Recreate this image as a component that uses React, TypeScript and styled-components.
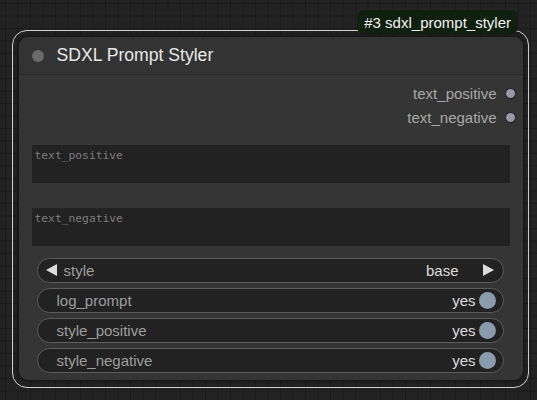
import React from "react";
import styled, { createGlobalStyle } from "styled-components";

const Global = createGlobalStyle`
  html, body { margin: 0; padding: 0; background: #222; }
  body { font-family: "Liberation Sans", Arial, sans-serif; }
`;

const Canvas = styled.div`
  position: relative;
  width: 537px;
  height: 400px;
  overflow: hidden;
  background-color: #232323;
  background-image:
    linear-gradient(to right, #1b1b1b 1px, transparent 1px),
    linear-gradient(to bottom, #1b1b1b 1px, transparent 1px);
  background-size: 12.5px 12.5px;
  background-position: 5px 3px;
  padding: 30px 0 0 12px;
  box-sizing: border-box;
`;

const Outline = styled.div`
  position: relative;
  width: 517px;
  height: 358px;
  box-sizing: border-box;
  border: 1.5px solid #d0d0d0;
  border-radius: 15px;
  padding: 5.5px 5.5px 7.5px 5.5px;
`;

const Badge = styled.div`
  position: absolute;
  top: -21px;
  right: 10px;
  height: 24px;
  padding: 0 7px;
  display: flex;
  align-items: center;
  background: #10200f;
  color: #f2f2f2;
  font-size: 15px;
  border-radius: 7px;
  white-space: nowrap;
`;

const Node = styled.div`
  display: flex;
  flex-direction: column;
  height: 100%;
  background: #353535;
  border-radius: 9px;
  box-shadow: 0 0 5px 1px rgba(0, 0, 0, 0.45);
  overflow: hidden;
`;

const TitleBar = styled.div`
  display: flex;
  align-items: center;
  height: 38px;
  padding-left: 13px;
  padding-top: 1px;
  box-sizing: border-box;
  gap: 13px;
  background: #333;
  border-bottom: 1px solid #2b2b2b;
  flex-shrink: 0;
`;

const TitleDot = styled.div`
  width: 12px;
  height: 12px;
  border-radius: 50%;
  background: #6a6a6a;
`;

const Title = styled.div`
  color: #e8e8e8;
  font-size: 17.6px;
`;

const Outputs = styled.div`
  display: flex;
  flex-direction: column;
  padding-top: 7px;
`;

const OutputRow = styled.div`
  display: flex;
  justify-content: flex-end;
  align-items: center;
  height: 24px;
  padding-right: 7px;
  gap: 8px;
  color: #a8a8a8;
  font-size: 15px;
`;

const SlotDot = styled.div`
  width: 9px;
  height: 9px;
  border-radius: 50%;
  background: #9a9aa6;
  border: 1px solid #1a1a1a;
`;

const TextBox = styled.div<{ $mt: number }>`
  margin: ${(p) => p.$mt}px 13px 0 13px;
  height: 38px;
  flex-shrink: 0;
  background: #222;
  color: #7c7c7c;
  font-family: "DejaVu Sans Mono", "Liberation Mono", monospace;
  font-size: 11.3px;
  padding: 4px 3px;
  box-sizing: border-box;
`;

const Widgets = styled.div`
  display: flex;
  flex-direction: column;
  gap: 5px;
  margin: 12px 19px 0 18px;
`;

const Widget = styled.div`
  display: flex;
  align-items: center;
  height: 25px;
  box-sizing: border-box;
  border: 1px solid #5c5c5c;
  border-radius: 13px;
  background: #222;
  font-size: 15px;
  padding: 0 10px 0 19px;
`;

const ComboWidget = styled(Widget)`
  padding: 0 9px 0 8px;
`;

const Label = styled.span`
  color: #9d9d9d;
  flex: 1;
`;

const Value = styled.span`
  color: #dcdcdc;
`;

const Arrow = styled.span<{ $right?: boolean }>`
  width: 0;
  height: 0;
  border-top: 6px solid transparent;
  border-bottom: 6px solid transparent;
  ${(p) =>
    p.$right
      ? "border-left: 11px solid #dcdcdc; margin-left: 24px;"
      : "border-right: 11px solid #dcdcdc; margin-right: 7px;"}
`;

const Toggle = styled.span`
  width: 17px;
  height: 17px;
  border-radius: 50%;
  background: #8a9bae;
  margin-left: 3px;
  margin-right: -3px;
`;

const toggles = ["log_prompt", "style_positive", "style_negative"];

export default function App() {
  return (
    <>
      <Global />
      <Canvas>
        <Outline>
          <Badge>#3 sdxl_prompt_styler</Badge>
          <Node>
            <TitleBar>
              <TitleDot />
              <Title>SDXL Prompt Styler</Title>
            </TitleBar>
            <Outputs>
              <OutputRow>
                text_positive
                <SlotDot />
              </OutputRow>
              <OutputRow>
                text_negative
                <SlotDot />
              </OutputRow>
            </Outputs>
            <TextBox $mt={15}>text_positive</TextBox>
            <TextBox $mt={25}>text_negative</TextBox>
            <Widgets>
              <ComboWidget>
                <Arrow />
                <Label>style</Label>
                <Value>base</Value>
                <Arrow $right />
              </ComboWidget>
              {toggles.map((t) => (
                <Widget key={t}>
                  <Label>{t}</Label>
                  <Value>yes</Value>
                  <Toggle />
                </Widget>
              ))}
            </Widgets>
          </Node>
        </Outline>
      </Canvas>
    </>
  );
}
